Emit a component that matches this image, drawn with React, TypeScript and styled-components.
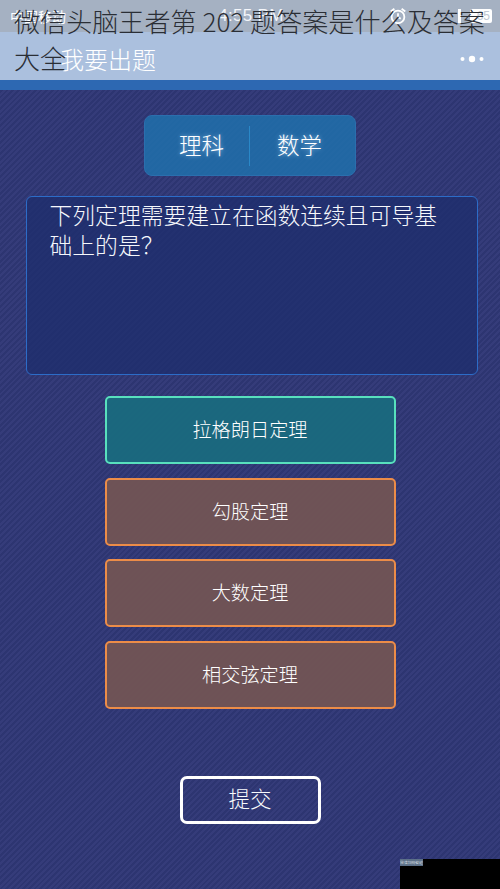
import React from "react";
import styled, { createGlobalStyle } from "styled-components";

const Global = createGlobalStyle`
  html, body { margin: 0; padding: 0; background: #2f3671; }
  body { font-family: "Noto Sans CJK SC", "Noto Sans", sans-serif; font-weight: 300; }
  * { box-sizing: border-box; }
`;

const Page = styled.div`
  position: relative;
  width: 500px;
  height: 889px;
  overflow: hidden;
  display: flex;
  flex-direction: column;
  background: repeating-linear-gradient(135deg, #2d3571 0 2px, #353c7a 2px 4px);
`;

const ArticleTitle = styled.h1`
  position: absolute;
  left: 14px;
  top: 3px;
  width: 480px;
  margin: 0;
  font-size: 26.1px;
  line-height: 37px;
  font-weight: 300;
  color: #2a2e35;
  z-index: 2;
`;

const StatusBar = styled.div`
  height: 32px;
  flex: none;
  background: #a5b1c2;
  display: flex;
  align-items: center;
  justify-content: space-between;
  padding: 0 8px 0 10px;
  color: #fff;
`;

const Carrier = styled.span`
  width: 130px;
  font-size: 14px;
  font-weight: 400;
`;

const Clock = styled.span`
  font-family: "Liberation Sans", sans-serif;
  font-size: 17px;
  font-weight: 400;
  letter-spacing: 0.3px;
  color: #f4f6fa;
`;

const StatusIcons = styled.div`
  width: 130px;
  display: flex;
  align-items: center;
  justify-content: flex-end;
`;

const AlarmSlot = styled.span`
  display: flex;
  margin-right: 50px;
`;

const BatteryTick = styled.span`
  width: 3px;
  height: 14px;
  margin-right: 9px;
  background: #fff;
`;

const BatteryBody = styled.span`
  width: 22px;
  height: 14px;
  border-radius: 2px;
  background: #fff;
  color: #c0c8d4;
  font-family: "Liberation Sans", sans-serif;
  font-size: 12px;
  line-height: 14px;
  text-align: right;
  padding-right: 2px;
`;

const NavBar = styled.div`
  height: 48px;
  flex: none;
  background: #abc0de;
  display: flex;
  align-items: center;
  justify-content: space-between;
  padding: 6px 16px 0 60px;
`;

const NavTitle = styled.span`
  color: #fff;
  font-size: 24px;
  line-height: 34px;
`;

const Strip = styled.div`
  height: 10px;
  flex: none;
  background: #2d68b2;
`;

const Content = styled.main`
  flex: 1;
  display: flex;
  flex-direction: column;
  align-items: center;
  padding-top: 25px;
`;

const Subject = styled.div`
  width: 212px;
  height: 61px;
  display: flex;
  align-items: center;
  border: 1px solid #2a6fae;
  border-radius: 8px;
  background: rgba(32, 112, 172, 0.85);
`;

const SubjectCell = styled.div<{ $inset: string }>`
  flex: 1;
  height: 40px;
  padding: ${(p) => p.$inset};
  text-align: center;
  color: #fff;
  font-size: 22.5px;
  line-height: 36px;
  text-shadow: 0 0 4px rgba(190, 225, 255, 0.7);
  &:first-child { flex: 0 0 104px; }
  & + & { border-left: 1.5px solid #2a88c8; }
`;

const Question = styled.div`
  width: 452px;
  height: 179px;
  margin-top: 20px;
  margin-left: 3px;
  padding: 3px 30px 0 23px;
  border: 1px solid #2c6cc8;
  border-radius: 6px;
  background: rgba(30, 46, 110, 0.75);
  color: #f6f8fc;
  font-size: 22.8px;
  line-height: 30px;
`;

const Options = styled.div`
  margin-top: 21px;
  display: flex;
  flex-direction: column;
  gap: 13.5px;
`;

const Option = styled.div<{ $selected?: boolean }>`
  width: 291px;
  height: 68px;
  display: flex;
  align-items: center;
  justify-content: center;
  padding-bottom: 2px;
  border: 2.5px solid ${(p) => (p.$selected ? "#58e0bd" : "#ec8c48")};
  border-radius: 5px;
  background: ${(p) => (p.$selected ? "rgba(26, 106, 126, 0.95)" : "rgba(114, 84, 84, 0.95)")};
  color: #fff;
  font-size: 19.2px;
`;

const Submit = styled.div`
  width: 141px;
  height: 48px;
  margin-top: 67px;
  display: flex;
  align-items: center;
  justify-content: center;
  padding-bottom: 5px;
  border: 3px solid #fff;
  border-radius: 7px;
  color: #f8fafc;
  font-size: 21.5px;
`;

const CornerBox = styled.div`
  position: absolute;
  right: 0;
  bottom: 0;
  width: 100px;
  height: 30px;
  background: #000;
`;

const CornerLabel = styled.div`
  position: absolute;
  left: 0;
  top: 0;
  width: 23px;
  height: 7px;
  background: #5c7088;
  color: #e8edf2;
  font-size: 3.8px;
  line-height: 7px;
  text-align: center;
  white-space: nowrap;
`;

const Alarm = () => (
  <svg width="20" height="20" viewBox="0 0 22 22" fill="none" stroke="#fff" strokeWidth="2">
    <circle cx="11" cy="12" r="7" />
    <path d="M11 8v4l3 2M3 6l4-3M19 6l-4-3" />
  </svg>
);

const Dots = () => (
  <svg width="24" height="10" viewBox="0 0 24 10" fill="#fff">
    <circle cx="2.5" cy="5" r="2" />
    <circle cx="12" cy="5" r="3.2" />
    <circle cx="21.5" cy="5" r="2" />
  </svg>
);

export default function App() {
  return (
    <Page>
      <Global />
      <ArticleTitle>微信头脑王者第 202 题答案是什么及答案大全</ArticleTitle>
      <StatusBar>
        <Carrier>中国移动</Carrier>
        <Clock>4:55 PM</Clock>
        <StatusIcons>
          <AlarmSlot>
            <Alarm />
          </AlarmSlot>
          <BatteryTick />
          <BatteryBody>65</BatteryBody>
        </StatusIcons>
      </StatusBar>
      <NavBar>
        <NavTitle>我要出题</NavTitle>
        <Dots />
      </NavBar>
      <Strip />
      <Content>
        <Subject>
          <SubjectCell $inset="0 0 0 9px">理科</SubjectCell>
          <SubjectCell $inset="0 6px 0 0">数学</SubjectCell>
        </Subject>
        <Question>下列定理需要建立在函数连续且可导基础上的是？</Question>
        <Options>
          <Option $selected>拉格朗日定理</Option>
          <Option>勾股定理</Option>
          <Option>大数定理</Option>
          <Option>相交弦定理</Option>
        </Options>
        <Submit>提交</Submit>
      </Content>
      <CornerBox>
        <CornerLabel>微信扫码答题</CornerLabel>
      </CornerBox>
    </Page>
  );
}
